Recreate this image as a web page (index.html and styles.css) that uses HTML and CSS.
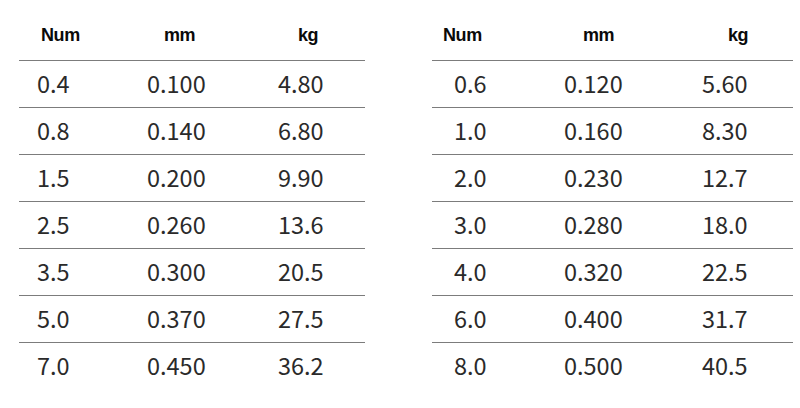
FILE: index.html
```html
<!DOCTYPE html>
<html>
<head>
<meta charset="utf-8">
<link rel="stylesheet" href="styles.css">
</head>
<body>
<div class="page">
  <div class="table left">
    <div class="head"><span>Num</span><span>mm</span><span>kg</span></div>
    <div class="row"><span>0.4</span><span>0.100</span><span>4.80</span></div>
    <div class="row"><span>0.8</span><span>0.140</span><span>6.80</span></div>
    <div class="row"><span>1.5</span><span>0.200</span><span>9.90</span></div>
    <div class="row"><span>2.5</span><span>0.260</span><span>13.6</span></div>
    <div class="row"><span>3.5</span><span>0.300</span><span>20.5</span></div>
    <div class="row"><span>5.0</span><span>0.370</span><span>27.5</span></div>
    <div class="row"><span>7.0</span><span>0.450</span><span>36.2</span></div>
  </div>
  <div class="table right">
    <div class="head"><span>Num</span><span>mm</span><span>kg</span></div>
    <div class="row"><span>0.6</span><span>0.120</span><span>5.60</span></div>
    <div class="row"><span>1.0</span><span>0.160</span><span>8.30</span></div>
    <div class="row"><span>2.0</span><span>0.230</span><span>12.7</span></div>
    <div class="row"><span>3.0</span><span>0.280</span><span>18.0</span></div>
    <div class="row"><span>4.0</span><span>0.320</span><span>22.5</span></div>
    <div class="row"><span>6.0</span><span>0.400</span><span>31.7</span></div>
    <div class="row"><span>8.0</span><span>0.500</span><span>40.5</span></div>
  </div>
</div>
</body>
</html>
```
FILE: styles.css
```css
html, body {
  margin: 0;
  padding: 0;
  background: #ffffff;
}
.page {
  display: flex;
  width: 800px;
  height: 408px;
  padding-left: 19px;
  gap: 67px;
  box-sizing: border-box;
}
.table {
  display: flex;
  flex-direction: column;
}
.left { width: 346px; }
.right { width: 361px; }
.head {
  display: grid;
  height: 60px;
  box-sizing: border-box;
  padding-top: 10px;
  line-height: 50px;
  font-family: "Liberation Sans", Arial, sans-serif;
  font-weight: bold;
  font-size: 18px;
  letter-spacing: -0.4px;
  color: #0a0a0a;
}
.row {
  display: grid;
  height: 47px;
  box-sizing: border-box;
  border-top: 1px solid #7c7c7c;
  padding-top: 1px;
  line-height: 42px;
  font-family: "Noto Sans CJK SC", "Noto Sans", sans-serif;
  font-size: 23.5px;
  color: #2a2a2a;
}
.left .head {
  padding-left: 22px;
  grid-template-columns: 123px 134px 1fr;
}
.left .row {
  padding-left: 18px;
  grid-template-columns: 110px 131px 1fr;
}
.right .head {
  padding-left: 11px;
  grid-template-columns: 140px 145px 1fr;
}
.right .row {
  padding-left: 22px;
  grid-template-columns: 110px 138px 1fr;
}
```
